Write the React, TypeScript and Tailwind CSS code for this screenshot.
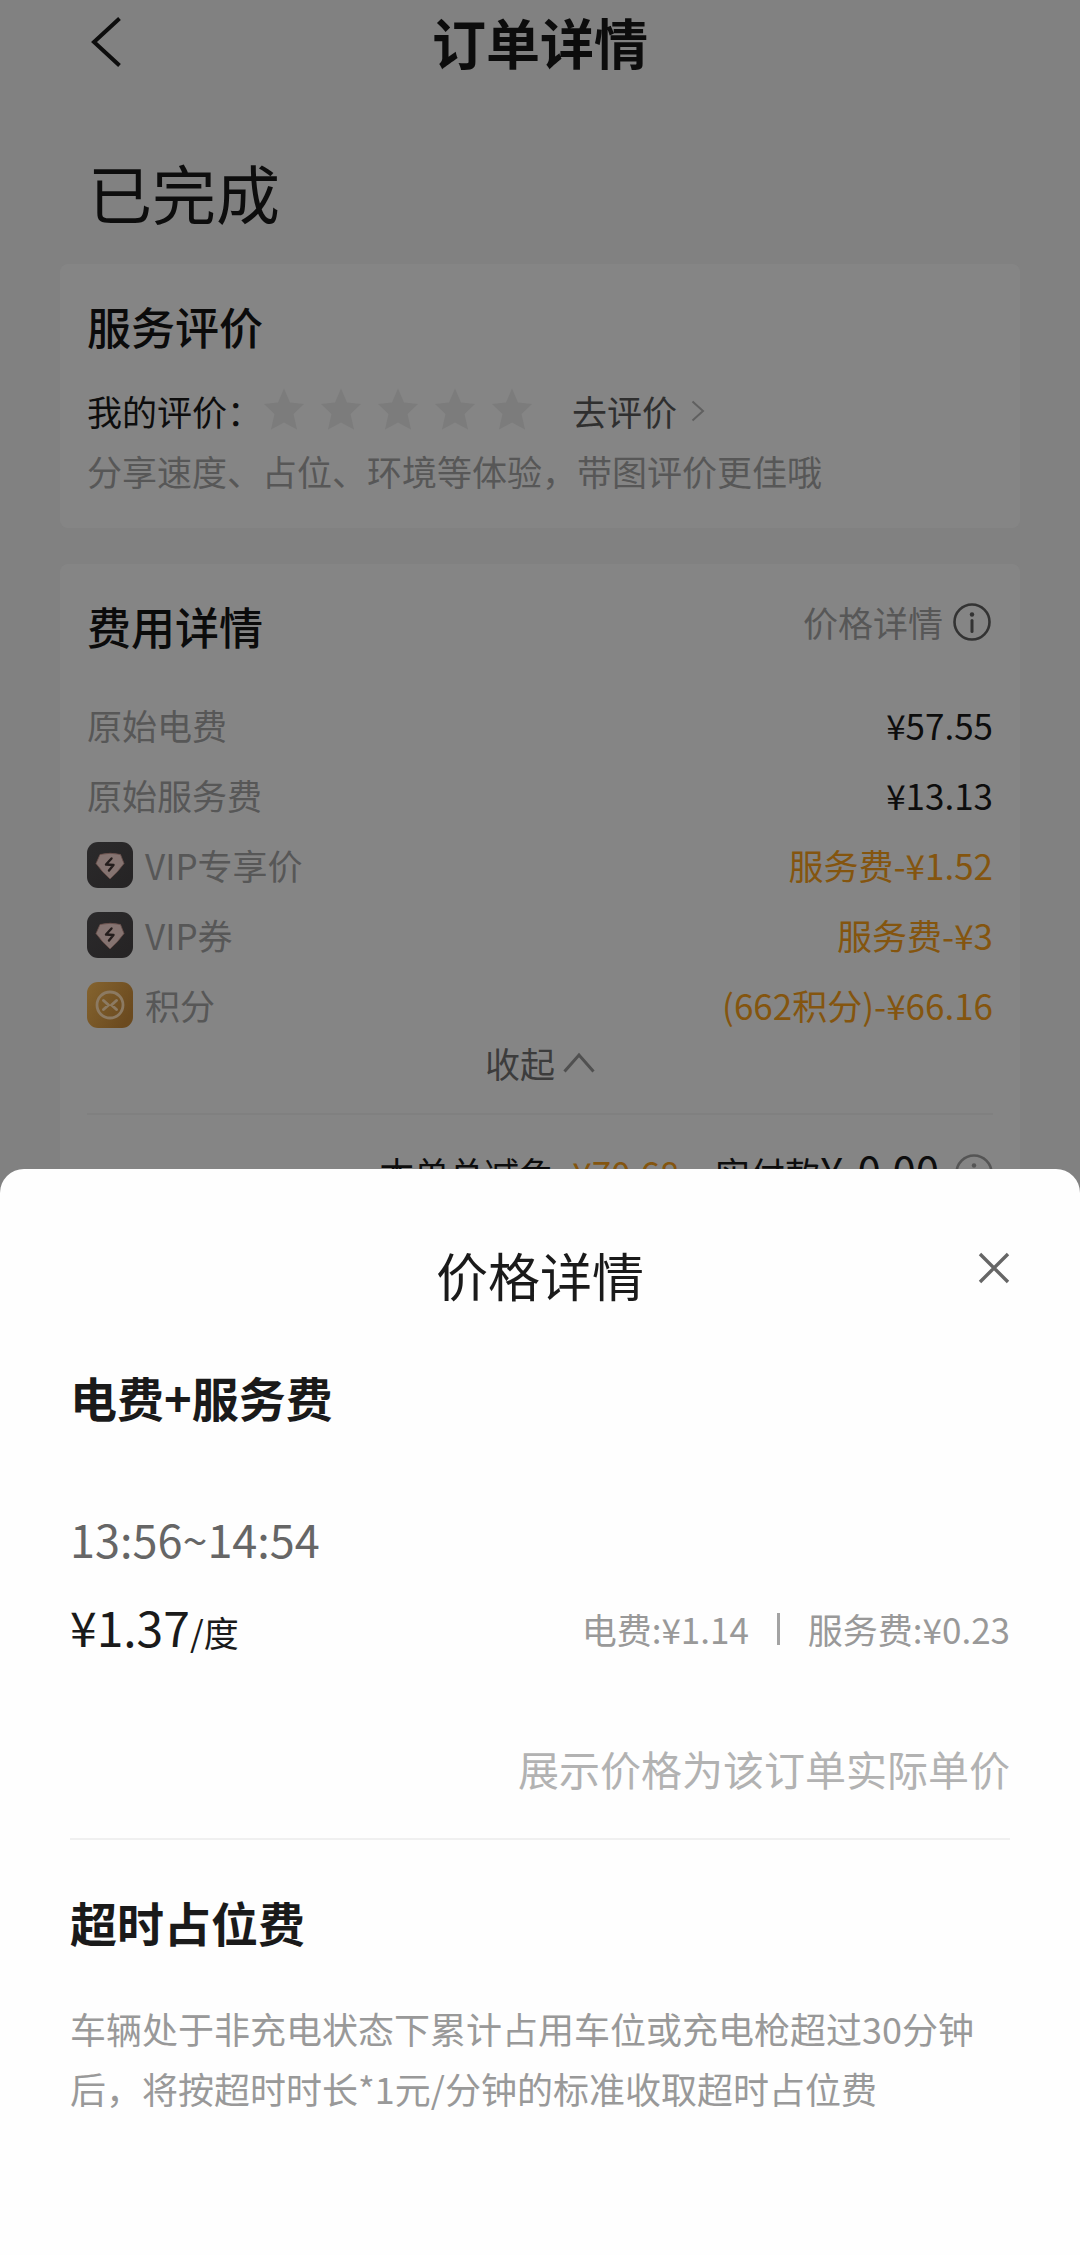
import React from "react";

function InfoIcon({ className }: { className: string }) {
  return (
    <svg viewBox="0 0 38 38" className={className} fill="none" aria-hidden="true">
      <circle cx="19" cy="19" r="17.5" stroke="currentColor" strokeWidth="2.6" />
      <circle cx="19" cy="11.5" r="2.2" fill="currentColor" />
      <path d="M19 17.5v11" stroke="currentColor" strokeWidth="3" strokeLinecap="round" />
    </svg>
  );
}

function StarIcon() {
  return (
    <svg viewBox="0 0 40 42" className="h-[42px] w-10 text-[#7c7c7c]" fill="currentColor" aria-hidden="true">
      <path d="M20 0.5 26 14.5 40 16 29.500 26 33 41.500 20 34.500 7 41.500 10.500 26 0 16 14 14.500Z" />
    </svg>
  );
}

function VipIcon() {
  return (
    <svg viewBox="0 0 46 46" className="size-[46px]" fill="none" aria-hidden="true">
      <defs>
        <linearGradient id="vip" x1="0" y1="0" x2="1" y2="1">
          <stop offset="0" stopColor="#2b2a2b" />
          <stop offset="1" stopColor="#252324" />
        </linearGradient>
      </defs>
      <rect width="46" height="46" rx="11" fill="url(#vip)" />
      <path
        d="M13 12.500Q23 10 33.500 12.500L37 21.500Q31 30 23 37Q15 30 9 21.500Z"
        fill="#857471"
        stroke="#6b4f4a"
        strokeWidth="0.8"
        strokeLinejoin="round"
      />
      <path
        d="M24.500 16.500 19 22.500 26.500 23 22 28.500"
        stroke="#241d1c"
        strokeWidth="2.400"
        strokeLinecap="round"
        strokeLinejoin="round"
      />
    </svg>
  );
}

function PointsIcon() {
  return (
    <svg viewBox="0 0 46 46" className="size-[46px]" fill="none" aria-hidden="true">
      <defs>
        <linearGradient id="points" x1="0" y1="0" x2="1" y2="0.6">
          <stop offset="0" stopColor="#85642f" />
          <stop offset="1" stopColor="#6b4a1f" />
        </linearGradient>
      </defs>
      <rect width="46" height="46" rx="11" fill="url(#points)" />
      <circle cx="23" cy="23" r="13" stroke="#8c7a62" strokeWidth="2.800" />
      <path
        d="M16.500 18.500 21.500 23 16.500 27.500M29.500 18.500 24.500 23 29.500 27.500"
        stroke="#8c7a62"
        strokeWidth="3"
        strokeLinecap="round"
        strokeLinejoin="round"
      />
    </svg>
  );
}

type Fee = { label: string; value: string; icon?: React.ReactNode; discount?: boolean };

const fees: Fee[] = [
  { label: "原始电费", value: "¥57.55" },
  { label: "原始服务费", value: "¥13.13" },
  { label: "VIP专享价", value: "服务费-¥1.52", icon: <VipIcon />, discount: true },
  { label: "VIP券", value: "服务费-¥3", icon: <VipIcon />, discount: true },
  { label: "积分", value: "(662积分)-¥66.16", icon: <PointsIcon />, discount: true },
];

function OrderPage() {
  return (
    <div>
      <header className="grid h-[84px] grid-cols-[1fr_auto_1fr] items-center px-[88px]">
        <button type="button" aria-label="返回" className="justify-self-start">
          <svg viewBox="0 0 36 50" className="h-[50px] w-9" fill="none" aria-hidden="true">
            <path d="M31.500 1.500 6 25 31.500 48.500" stroke="#0d0d0d" strokeWidth="4" />
          </svg>
        </button>
        <h1 className="text-[54px] leading-[84px] font-bold text-[#0c0c0c]">订单详情</h1>
      </header>

      <p className="mt-[67px] px-[88px] text-[64px] leading-[80px] text-[#0d0d0d]">已完成</p>

      <main className="px-[60px]">
        <section className="mt-[33px] rounded-lg bg-[#858585] px-[27px] py-8">
          <h2 className="text-[44px] leading-[60px] font-medium text-[#0b0b0b]">服务评价</h2>
          <div className="mt-[30px] flex h-[50px] items-center text-[35px] leading-[50px]">
            <span className="text-[#0d0d0d]">我的评价：</span>
            <div className="ml-0.5 flex gap-[17px] pb-1">
              {[1, 2, 3, 4, 5].map((n) => (
                <button key={n} type="button" aria-label={`${n}星`}>
                  <StarIcon />
                </button>
              ))}
            </div>
            <a href="#review" className="ml-10 flex items-center gap-[14px] text-[#2f2f2f]">
              去评价
              <svg viewBox="0 0 14 22" className="h-[22px] w-[14px] text-[#606060]" fill="none" aria-hidden="true">
                <path d="M1.500 1.500 12 11 1.500 20.500" stroke="currentColor" strokeWidth="2" />
              </svg>
            </a>
          </div>
          <p className="mt-[10px] text-[35px] leading-[50px] text-[#575757]">
            分享速度、占位、环境等体验，带图评价更佳哦
          </p>
        </section>

        <section className="mt-9 rounded-lg bg-[#858585] px-[27px] py-8">
          <div className="flex items-start justify-between">
            <h2 className="text-[44px] leading-[60px] font-medium text-[#0b0b0b]">费用详情</h2>
            <button type="button" className="mr-0.5 flex h-[52px] items-center gap-[10px] text-[35px] text-[#575757]">
              价格详情
              <InfoIcon className="size-[38px] text-[#333333]" />
            </button>
          </div>

          <dl className="mt-[34px] text-[35px]">
            {fees.map((fee) => (
              <div key={fee.label} className="flex h-[70px] items-center justify-between">
                <dt className="flex items-center gap-3 text-[#575757]">
                  {fee.icon}
                  {fee.label}
                </dt>
                <dd className={fee.discount ? "text-[#84550f]" : "text-[#0d0d0d]"}>{fee.value}</dd>
              </div>
            ))}
          </dl>

          <button type="button" className="mx-auto flex h-[46px] items-center gap-2 text-[35px] text-[#3c3c3c]">
            收起
            <svg viewBox="0 0 32 22" className="h-[22px] w-8 text-[#505050]" fill="none" aria-hidden="true">
              <path d="M1.500 19.500 16 3 30.500 19.500" stroke="currentColor" strokeWidth="3" />
            </svg>
          </button>

          <hr className="mt-[27px] border-t-2 border-[#808080]" />

          <div className="mt-[23px] flex h-[70px] items-center justify-end text-[35px] leading-[50px] text-[#0d0d0d]">
            <div className="flex items-baseline pb-1">
              <span>本单总减免</span>
              <span className="ml-[18px] text-[#84550f]">¥70.68</span>
              <span className="ml-9">实付款</span>
              <span className="text-[42px]">¥</span>
              <span className="ml-[14px] text-[42px]">0.00</span>
            </div>
            <InfoIcon className="ml-4 size-[38px] text-[#555555]" />
          </div>
        </section>
      </main>
    </div>
  );
}

function PriceSheet() {
  return (
    <section
      role="dialog"
      aria-labelledby="sheet-title"
      className="absolute inset-x-0 bottom-0 rounded-t-3xl bg-[#fefefe] px-[70px] pt-[70px] pb-[137px] text-[#1a1a1a]"
    >
      <div className="grid grid-cols-[1fr_auto_1fr]">
        <h2 id="sheet-title" className="col-start-2 text-[52px] leading-[72px]">
          价格详情
        </h2>
        <button type="button" aria-label="关闭" className="flex h-[58px] items-center justify-self-end">
          <svg viewBox="0 0 32 32" className="size-8 text-[#666666]" fill="none" aria-hidden="true">
            <path d="M2 2 30 30M30 2 2 30" stroke="currentColor" strokeWidth="3.400" />
          </svg>
        </button>
      </div>

      <h3 className="mt-[56px] text-[47px] leading-[60px] font-bold">电费+服务费</h3>
      <p className="mt-[82px] text-[45px] leading-[60px] text-[#666666]">13:56~14:54</p>
      <div className="mt-[30px] flex h-[60px] items-center justify-between">
        <p className="text-[48px] leading-[60px]">
          ¥1.37<span className="text-[35px]">/度</span>
        </p>
        <p className="flex items-center gap-7 text-[35px] text-[#999999]">
          <span>电费:¥1.14</span>
          <span className="h-8 w-[3px] bg-[#a3a3a3]" />
          <span>服务费:¥0.23</span>
        </p>
      </div>
      <p className="mt-[79px] text-right text-[41px] leading-[60px] text-[#b2b2b2]">展示价格为该订单实际单价</p>

      <hr className="mt-10 border-t-2 border-[#f0f0f0]" />

      <h3 className="mt-[52px] text-[47px] leading-[60px] font-bold">超时占位费</h3>
      <p className="mt-[46px] text-[36px] leading-[60px] text-[#999999]">
        车辆处于非充电状态下累计占用车位或充电枪超过30分钟后，将按超时时长*1元/分钟的标准收取超时占位费
      </p>
    </section>
  );
}

export default function App() {
  return (
    <div
      lang="zh-CN"
      className="relative min-h-screen overflow-hidden bg-[#818181] font-['Noto_Sans_CJK_SC',sans-serif]"
    >
      <OrderPage />
      <PriceSheet />
    </div>
  );
}
